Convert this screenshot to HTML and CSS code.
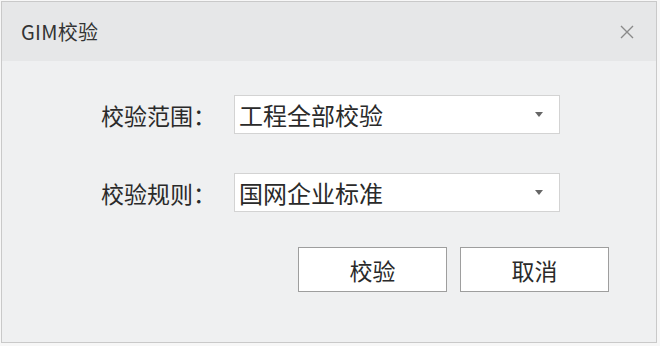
FILE: index.html
```html
<!DOCTYPE html>
<html>
<head>
  <title>GIM校验</title>
  <link rel="stylesheet" href="styles.css">
</head>
<body>
  <div class="window">
    <div class="titlebar">
      <span class="title">GIM校验</span>
      <svg class="close" width="14" height="14" viewBox="0 0 14 14">
        <path d="M1 1 L13 13 M13 1 L1 13" stroke="#8a8a8a" stroke-width="1.4" fill="none"/>
      </svg>
    </div>
    <div class="content">
      <div class="form">
        <label class="label">校验范围：</label>
        <div class="combo">
          <span>工程全部校验</span>
          <span class="arrow"></span>
        </div>
        <label class="label">校验规则：</label>
        <div class="combo">
          <span>国网企业标准</span>
          <span class="arrow"></span>
        </div>
      </div>
      <div class="actions">
        <button class="btn">校验</button>
        <button class="btn">取消</button>
      </div>
    </div>
  </div>
</body>
</html>
```

FILE: styles.css
```css
body {
  margin: 0;
  padding: 0;
  background: #f7f7f7;
  font-family: "Noto Sans CJK SC", "Noto Sans", sans-serif;
  color: #2a2a2a;
}

.window {
  margin: 1px;
  width: 656px;
  height: 342px;
  border: 1px solid #c9c9c9;
  background: #eff0f1;
  box-sizing: border-box;
  display: flex;
  flex-direction: column;
}

.titlebar {
  height: 59px;
  background: #e6e7e8;
  display: flex;
  align-items: center;
  justify-content: space-between;
  padding: 0 22px 0 19px;
}

.title {
  font-size: 20px;
  color: #333;
  letter-spacing: 0.3px;
}

.close {
  display: block;
}

.content {
  flex: 1;
  padding: 34px 47px 0 99px;
}

.form {
  display: grid;
  grid-template-columns: 133px 326px;
  row-gap: 39px;
  align-items: center;
}

.label {
  font-size: 23px;
}

.combo {
  height: 39px;
  box-sizing: border-box;
  border: 1px solid #d3d3d3;
  background: #fff;
  display: flex;
  align-items: center;
  justify-content: space-between;
  padding: 0 16px 0 4px;
  font-size: 24px;
}

.arrow {
  width: 0;
  height: 0;
  border-left: 4px solid transparent;
  border-right: 4px solid transparent;
  border-top: 5px solid #666;
}

.actions {
  display: flex;
  justify-content: flex-end;
  gap: 13px;
  margin-top: 35px;
}

.btn {
  width: 149px;
  height: 45px;
  border: 1px solid #9e9e9e;
  background: #fff;
  font-family: inherit;
  font-size: 23px;
  color: #2a2a2a;
  padding: 0;
}
```
